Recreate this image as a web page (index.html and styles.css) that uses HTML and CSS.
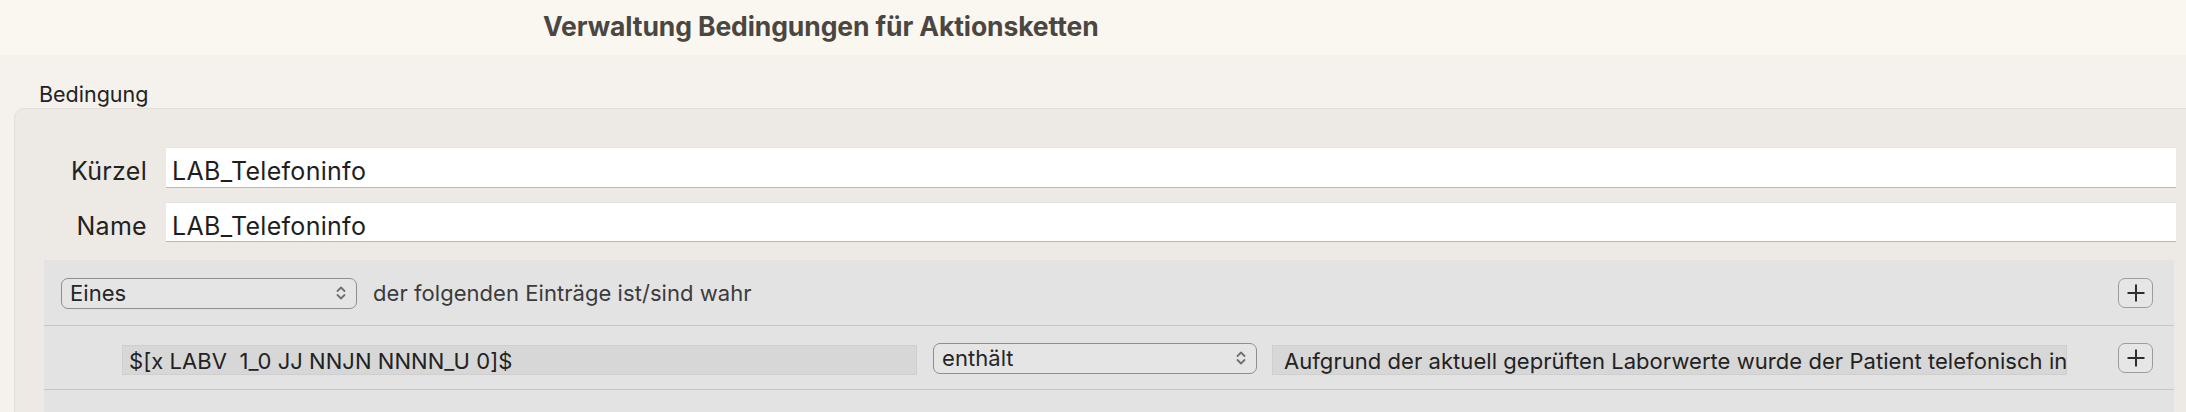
FILE: index.html
```html
<!DOCTYPE html>
<html lang="de">
<head>
<meta charset="utf-8">
<title>Verwaltung Bedingungen für Aktionsketten</title>
<link rel="stylesheet" href="styles.css">
</head>
<body>
<div class="window">
  <header class="titlebar">
    <h1 class="title">Verwaltung Bedingungen für Aktionsketten</h1>
  </header>
  <main class="content">
    <div class="group-label">Bedingung</div>
    <section class="group">
      <div class="form-row">
        <span class="label">Kürzel</span>
        <div class="input">LAB_Telefoninfo</div>
      </div>
      <div class="form-row">
        <span class="label">Name</span>
        <div class="input">LAB_Telefoninfo</div>
      </div>
      <div class="panel">
        <div class="prow prow-head">
          <div class="select select-mode">
            <span class="select-text">Eines</span>
            <svg class="chev" viewBox="0 0 10 16" width="10" height="16"><path d="M1.5 6 L5 2.5 L8.5 6 M1.5 10 L5 13.5 L8.5 10" fill="none" stroke="#707070" stroke-width="1.8" stroke-linecap="round" stroke-linejoin="round"/></svg>
          </div>
          <span class="ptext">der folgenden Einträge ist/sind wahr</span>
          <span class="spacer"></span>
          <button class="plus" type="button"><svg viewBox="0 0 18 18" width="18" height="18"><path d="M9 0.5 V17.5 M0.5 9 H17.5" stroke="#2e2e2e" stroke-width="2" fill="none"/></svg></button>
        </div>
        <div class="prow prow-item">
          <div class="field field-var">$[x LABV&nbsp;&nbsp;1_0 JJ NNJN NNNN_U 0]$</div>
          <div class="select select-op">
            <span class="select-text">enthält</span>
            <svg class="chev" viewBox="0 0 10 16" width="10" height="16"><path d="M1.5 6 L5 2.5 L8.5 6 M1.5 10 L5 13.5 L8.5 10" fill="none" stroke="#707070" stroke-width="1.8" stroke-linecap="round" stroke-linejoin="round"/></svg>
          </div>
          <div class="field field-val">Aufgrund der aktuell geprüften Laborwerte wurde der Patient telefonisch informiert</div>
          <span class="spacer"></span>
          <button class="plus" type="button"><svg viewBox="0 0 18 18" width="18" height="18"><path d="M9 0.5 V17.5 M0.5 9 H17.5" stroke="#2e2e2e" stroke-width="2" fill="none"/></svg></button>
        </div>
        <div class="prow prow-empty"></div>
      </div>
    </section>
  </main>
</div>
</body>
</html>
```
FILE: styles.css
```css
* { box-sizing: border-box; }
html, body {
  margin: 0;
  padding: 0;
}
body {
  width: 2186px;
  height: 412px;
  overflow: hidden;
  background: #f5f1ec;
  font-family: Inter, "Liberation Sans", sans-serif;
  color: #1f1f1f;
}
.window {
  width: 2186px;
  height: 412px;
  overflow: hidden;
}
.titlebar {
  height: 55px;
  background: #faf6f0;
  padding: 11px 0 0 543px;
}
.title {
  margin: 0;
  font-size: 26.5px;
  line-height: 30px;
  font-weight: 700;
  color: #4a4642;
  letter-spacing: -0.1px;
}
.content {
  background: #f5f1ec;
  padding: 26px 0 0 14px;
  height: 357px;
}
.group-label {
  font-size: 21.5px;
  line-height: 26px;
  margin: 0 0 1px 25px;
  color: #222;
}
.group {
  margin-right: -10px;
  background: #ede9e5;
  border: 1px solid #e2ded9;
  border-radius: 10px;
  padding: 38px 21px 0 29px;
  height: 320px;
}
.form-row {
  display: flex;
  align-items: flex-start;
  gap: 19px;
  margin-right: -2px;
  margin-bottom: 14px;
}
.form-row + .form-row { margin-bottom: 18px; }
.label {
  width: 103px;
  text-align: right;
  font-size: 25px;
  letter-spacing: 0.3px;
  line-height: 32px;
  padding-top: 8px;
  color: #222;
}
.input {
  flex: 1;
  height: 41px;
  background: #fff;
  border-top: 1px solid #e4e4e4;
  border-bottom: 1.5px solid #b8b8b8;
  padding: 7px 0 0 6px;
  font-size: 25px;
  letter-spacing: 0.3px;
  line-height: 32px;
  color: #1e1e1e;
}
.form-row + .form-row .input { height: 40px; }
.panel {
  background: #e3e3e3;
}
.prow {
  display: flex;
  align-items: center;
  border-bottom: 1px solid #c7c7c7;
  padding: 0 21px 0 17px;
}
.prow-head { height: 66px; padding-top: 1px; }
.prow-item { height: 64px; padding-left: 78px; padding-top: 1px; }
.prow-empty { height: 40px; border-bottom: none; }
.select {
  display: flex;
  align-items: center;
  justify-content: space-between;
  height: 31px;
  border: 1.6px solid #8e8e8e;
  border-radius: 7px;
  background: #e5e5e5;
  padding: 0 10px 0 8px;
  font-size: 22px;
  letter-spacing: 0.05px;
  color: #262626;
}
.select-mode { width: 296px; margin-right: 16px; }
.select-op { width: 324px; margin: 0 15px 0 16px; }
.select-text { line-height: 28px; }
.chev { flex: none; }
.ptext {
  font-size: 22px;
  letter-spacing: 0.05px;
  color: #3b3b3b;
  line-height: 28px;
}
.spacer { flex: 1; }
.field {
  width: 795px;
  height: 30px;
  background: #d7d7d7;
  border: 1px solid #cfcfcf;
  padding: 0 6px;
  font-size: 22px;
  letter-spacing: 0.05px;
  line-height: 30px;
  color: #222;
  white-space: nowrap;
  overflow: hidden;
  margin-top: 3px;
}
.field-val { padding-left: 11px; }
.plus {
  width: 35px;
  height: 30px;
  border: 1.6px solid #9c9c9c;
  border-radius: 7px;
  background: #e6e6e6;
  padding: 0;
  display: flex;
  align-items: center;
  justify-content: center;
}
.plus svg { display: block; }
```
